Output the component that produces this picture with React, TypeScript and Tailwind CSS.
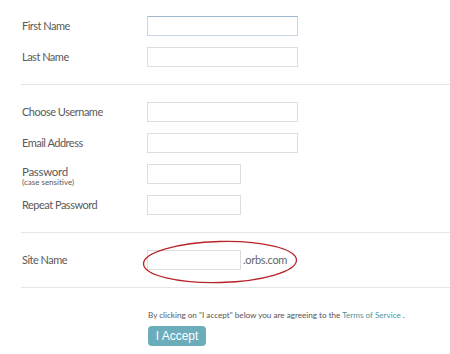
export default function App() {
  const label = "w-[126px] shrink-0 pl-[1px] text-[11px] tracking-[-0.5px] text-[#5a5a5a]";
  const input = "h-[20px] border border-[#ddd] bg-white outline-none";

  return (
    <div className="w-[450px] h-[354px] bg-white pl-[21px] font-['Lato','Liberation_Sans',sans-serif] overflow-hidden">
      <div className="flex flex-col gap-[11px] pt-[16px] pb-[17px] border-b border-[#e6e6e6]">
        <div className="flex items-center">
          <span className={label}>First Name</span>
          <input className="h-[20px] w-[151px] border border-[#c9d6e3] border-t-[#9fb6cf] bg-white outline-none" />
        </div>
        <div className="flex items-center">
          <span className={label}>Last Name</span>
          <input className={`${input} w-[151px]`} />
        </div>
      </div>

      <div className="flex flex-col gap-[11px] pt-[17px] pb-[17px] border-b border-[#e6e6e6]">
        <div className="flex items-center">
          <span className={label}>Choose Username</span>
          <input className={`${input} w-[151px]`} />
        </div>
        <div className="flex items-center">
          <span className={label}>Email Address</span>
          <input className={`${input} w-[151px]`} />
        </div>
        <div className="flex items-start h-[20px]">
          <div className={`${label} flex flex-col leading-[13px]`}>
            <span className="pt-[1px] text-[11.5px] tracking-[-0.3px]">Password</span>
            <span className="text-[8px] leading-[9px] tracking-normal">(case sensitive)</span>
          </div>
          <input type="password" className={`${input} w-[94px]`} />
        </div>
        <div className="flex items-center">
          <span className={label}>Repeat Password</span>
          <input type="password" className={`${input} w-[94px]`} />
        </div>
      </div>

      <div className="relative flex items-center pt-[17px] pb-[17px] border-b border-[#e6e6e6]">
        <span className={label}>Site Name</span>
        <input className={`${input} w-[94px]`} />
        <span className="ml-[2px] text-[11px] tracking-[-0.3px] text-[#666]">.orbs.com</span>
        <svg
          className="absolute left-[121px] top-[7px] pointer-events-none"
          width="158"
          height="46"
          viewBox="0 0 158 46"
        >
          <ellipse
            cx="78"
            cy="22"
            rx="76.5"
            ry="20.5"
            transform="rotate(-1.5 78 22)"
            fill="none"
            stroke="#b8242a"
            strokeWidth="1.3"
          />
        </svg>
      </div>

      <div className="pl-[127px] pt-[22px]">
        <p className="text-[8.15px] text-[#555] leading-[10px]">
          By clicking on "I accept" below you are agreeing to the{" "}
          <a className="text-[#4f95a2]">Terms of Service</a> .
        </p>
        <button className="mt-[6px] w-[58px] h-[20px] rounded-[4px] bg-[#6badba] text-white text-[12px] font-['Liberation_Sans',sans-serif]">
          I Accept
        </button>
      </div>
    </div>
  );
}
